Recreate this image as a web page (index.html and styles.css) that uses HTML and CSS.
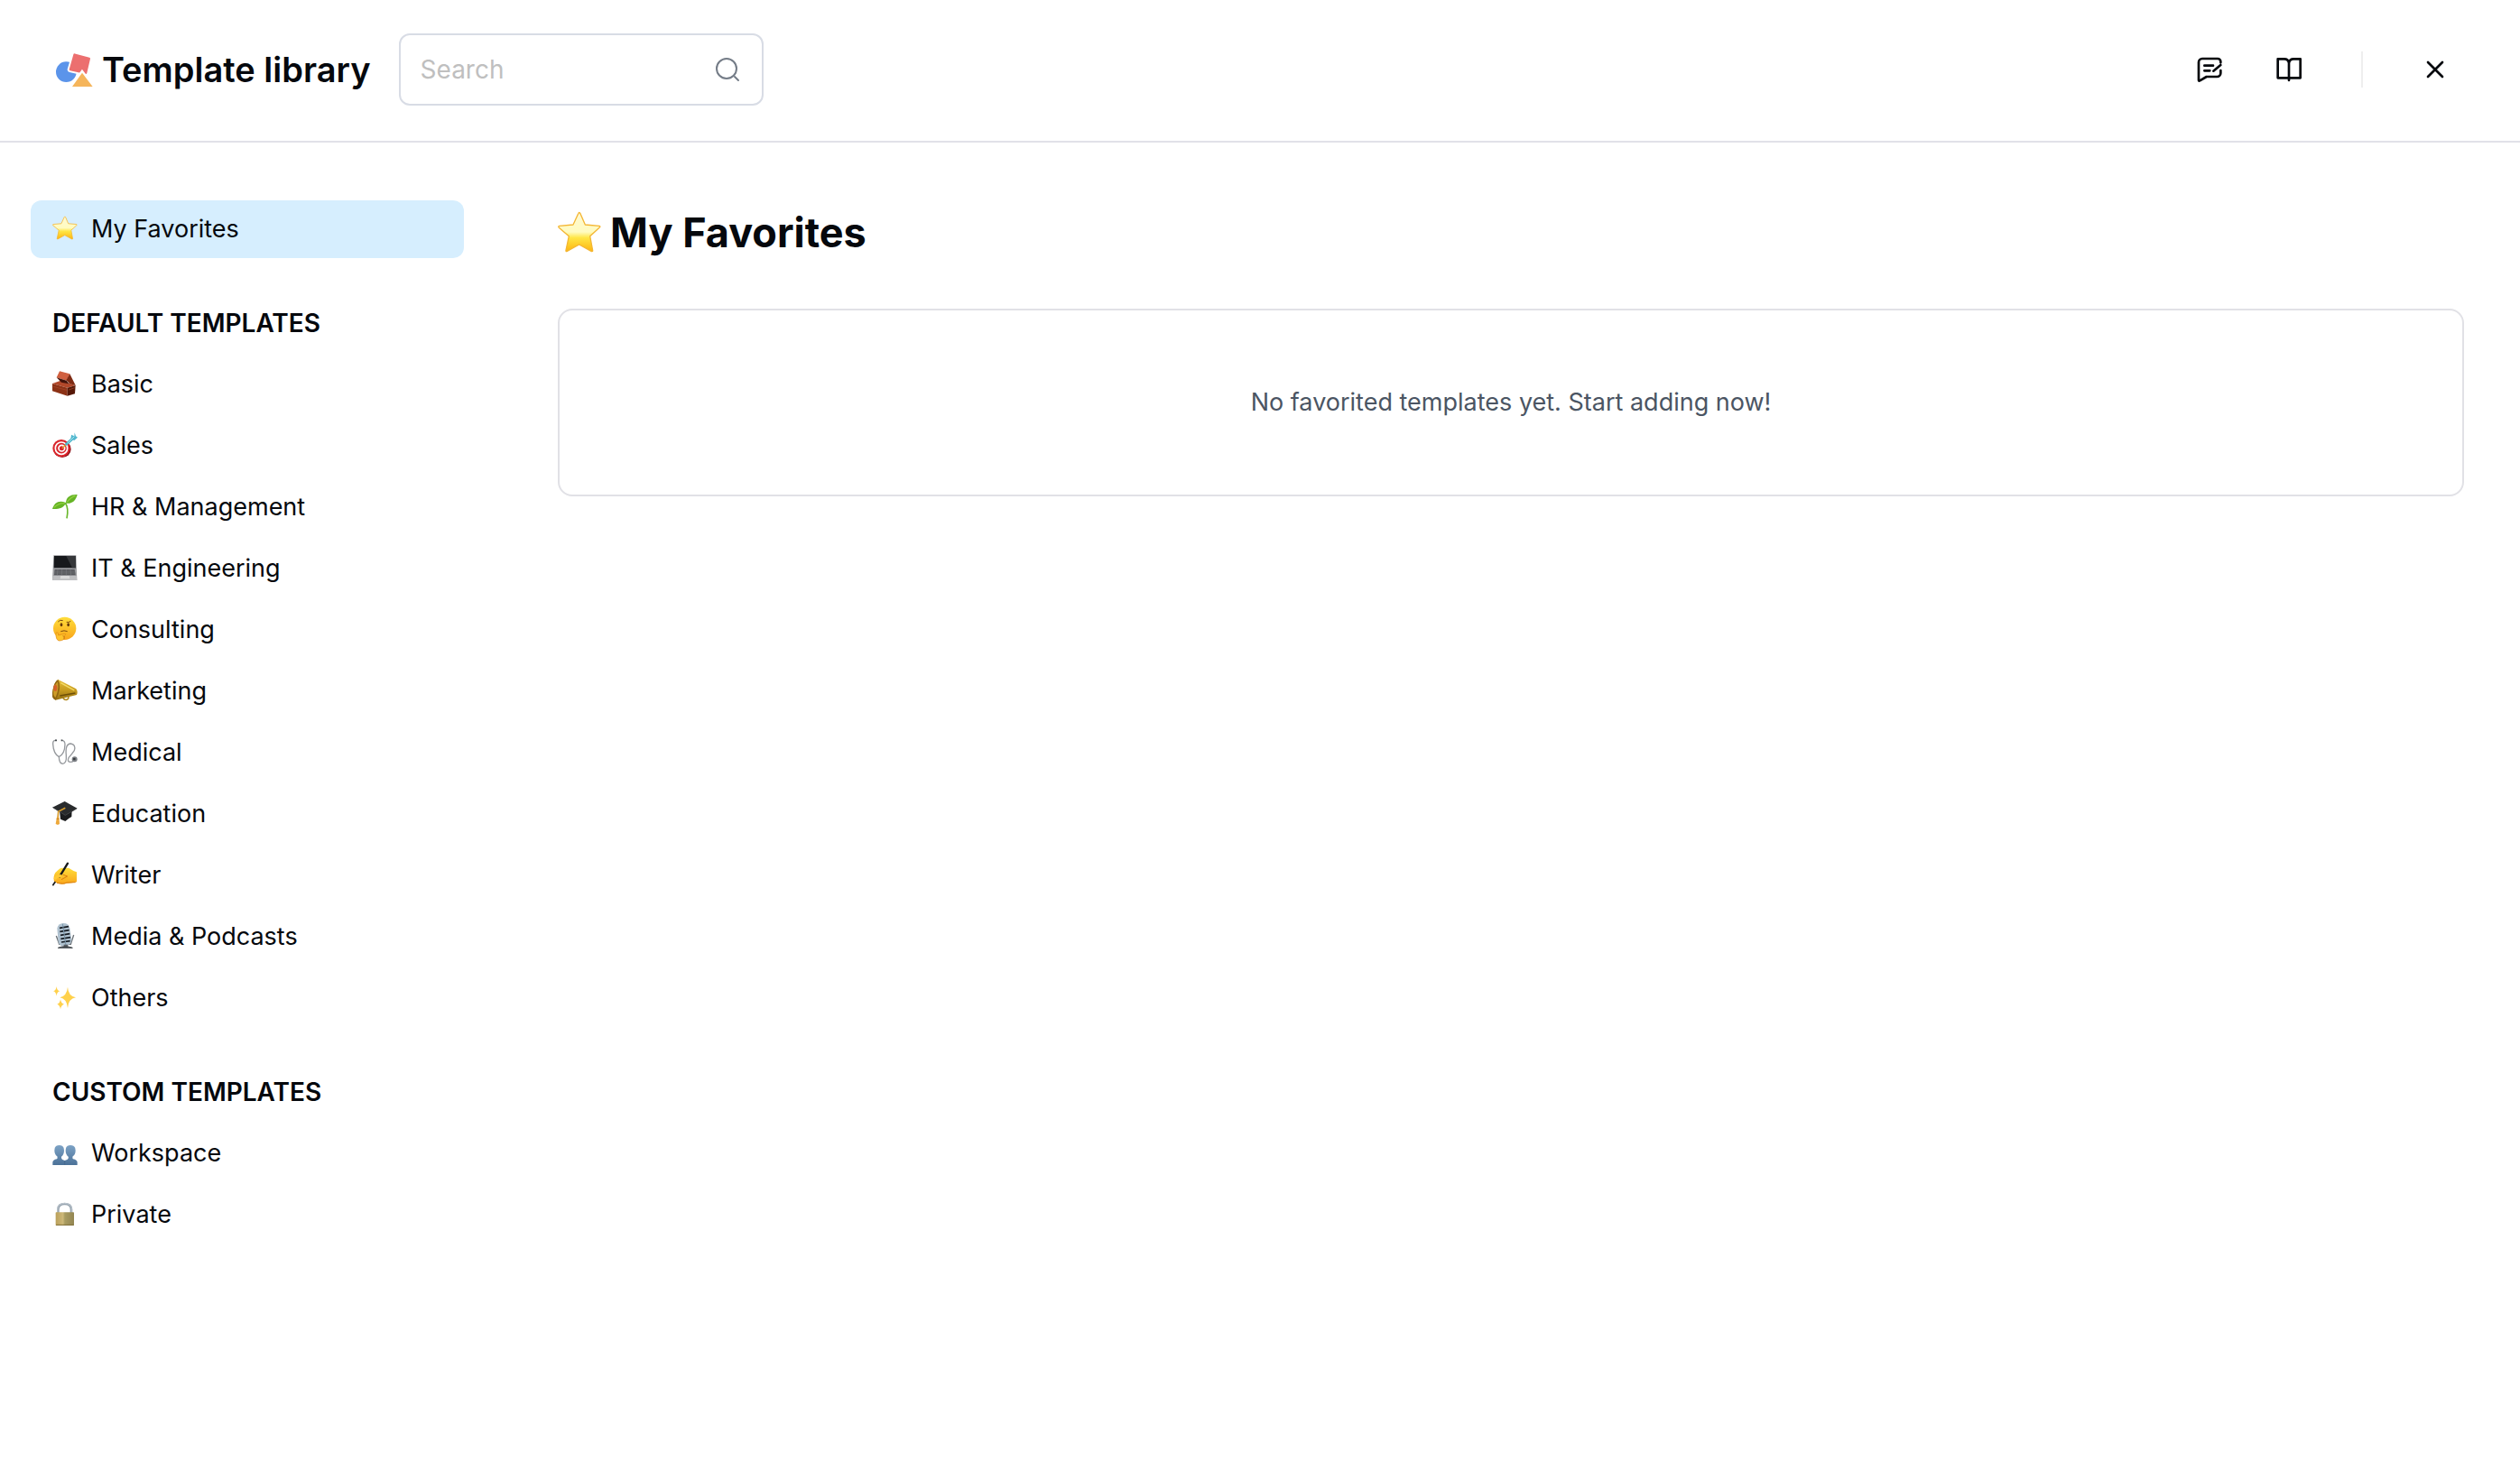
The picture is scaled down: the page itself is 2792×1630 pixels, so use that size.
FILE: index.html
```html
<!DOCTYPE html>
<html lang="en">

<head>
    <meta charset="UTF-8">
    <meta name="viewport" content="width=device-width, initial-scale=1.0">
    <title>Template library</title>
    <link rel="stylesheet" href="styles.css">
</head>

<body>
    <header class="header">
        <div class="brand">
            <svg class="logo" viewBox="36 39 123 117" aria-hidden="true">
                <circle cx="70" cy="104" r="34" fill="#5b94ea" />
                <path d="M98 46L147 59L136 108L83 96Z" fill="#fff" stroke="#fff" stroke-width="18" stroke-linejoin="round" />
                <path d="M98 47L146 60L135 107L84 96Z" fill="#ec6f6f" stroke="#ec6f6f" stroke-width="8" stroke-linejoin="round" />
                <path d="M123 107L158 153H90Z" fill="#fff" stroke="#fff" stroke-width="14" />
                <path d="M123 107L158 153H90Z" fill="#f5b55b" />
            </svg>
            <h1 class="title">Template library</h1>
        </div>
        <div class="search">
            <input type="text" class="search-input" placeholder="Search" aria-label="Search templates">
            <svg class="search-icon" viewBox="0 0 28 28" aria-hidden="true">
                <circle cx="13" cy="13" r="11" />
                <path d="M22 22L26 26" />
            </svg>
        </div>
        <div class="actions">
            <button type="button" class="icon-button" aria-label="Feedback">
                <svg viewBox="156 122 96 96" aria-hidden="true">
                    <path d="M241 147V144A10 10 0 0 0 231 134H180A12 12 0 0 0 168 146V205Q168 209 172 207L194 194H229A12 12 0 0 0 241 182V173M187 157H216M187 174H205M217 175L241 155" />
                </svg>
            </button>
            <button type="button" class="icon-button" aria-label="Guide">
                <svg viewBox="420 122 96 96" aria-hidden="true">
                    <path d="M468 148Q465 135 453 135H431V198H506V135H483Q471 135 468 148V206" />
                </svg>
            </button>
            <span class="divider"></span>
            <button type="button" class="icon-button" aria-label="Close">
                <svg viewBox="906 123 96 96" aria-hidden="true">
                    <path d="M930 147L978 195M978 147L930 195" />
                </svg>
            </button>
        </div>
    </header>

    <div class="layout">
        <nav class="sidebar" aria-label="Template categories">
            <a href="#favorites" class="item active">
                <svg class="emoji" viewBox="0 0 144 154" aria-hidden="true">
                    <use href="#star" />
                </svg>
                My Favorites
            </a>

            <h2 class="group">DEFAULT TEMPLATES</h2>
            <a href="#basic" class="item">
                <svg class="emoji" viewBox="0 0 84 90" aria-hidden="true">
                    <path d="M0 42L28 32L77 48L50 56Z" fill="#b2482a" />
                    <path d="M0 42L50 56V83L0 67Z" fill="#8c3216" />
                    <path d="M50 56L77 48L75 76L50 83Z" fill="#561807" />
                    <path d="M24 1L58 10L47 32L14 22Z" fill="#d06040" />
                    <path d="M58 10L77 48L58 43L46 31Z" fill="#7e2b14" />
                    <path d="M14 22L47 32L55 43L30 38Z" fill="#44130a" />
                    <path d="M3 52L48 64M55 63L74 56" stroke="#a8492c" stroke-width="2" fill="none" />
                </svg>
                Basic
            </a>
            <a href="#sales" class="item">
                <svg class="emoji" viewBox="0 0 84 90" aria-hidden="true">
                    <ellipse cx="33" cy="56" rx="29" ry="28" fill="#8d1118" />
                    <circle cx="30" cy="53" r="29" fill="#d9262c" />
                    <circle cx="30" cy="53" r="20" fill="none" stroke="#fff" stroke-width="5" />
                    <circle cx="31" cy="53" r="10" fill="none" stroke="#fff" stroke-width="5" />
                    <path d="M33 53L48 38" stroke="#d9a42c" stroke-width="4" />
                    <path d="M44 42L66 22" stroke="#4bb4c9" stroke-width="9" />
                    <path d="M61 23L63 8L73 13L74 1L78 13L84 17L73 27Z" fill="#52b7cf" />
                    <path d="M50 37L73 14" stroke="#a9e7ef" stroke-width="3" />
                </svg>
                Sales
            </a>
            <a href="#hr" class="item">
                <svg class="emoji" viewBox="0 0 84 90" aria-hidden="true">
                    <path d="M43 31Q55 48 48 82" stroke="#69b72b" stroke-width="5" fill="none" />
                    <path d="M0 51C7 29 22 21 45 30C38 49 20 52 0 51Z" fill="#65b425" />
                    <path d="M45 32C45 12 59 2 83 3C78 23 66 35 45 32Z" fill="#65b425" />
                    <path d="M6 46Q22 30 41 32M49 28Q60 12 77 7" stroke="#91cf41" stroke-width="4" fill="none" />
                </svg>
                HR &amp; Management
            </a>
            <a href="#it" class="item">
                <svg class="emoji" viewBox="0 0 84 90" aria-hidden="true">
                    <path d="M4 1H79L82 84H0Z" fill="#9c9da0" />
                    <path d="M6 3H77L78 43H5Z" fill="#17191c" />
                    <path d="M46 3H77L78 43H66Z" fill="#35373a" />
                    <path d="M8 48H74L77 67H6Z" fill="#55575b" />
                    <path d="M8 54H75M7 60H76M18 48L16 67M32 48L31 67M46 48V67M60 48L62 67" stroke="#77797d" stroke-width="2" />
                    <path d="M2 69H80L82 84H0Z" fill="#bebfc1" />
                    <path d="M28 69H56L58 79H26Z" fill="#dadadb" />
                </svg>
                IT &amp; Engineering
            </a>
            <a href="#consulting" class="item">
                <svg class="emoji" viewBox="0 0 84 90" aria-hidden="true">
                    <circle cx="41" cy="40" r="38" fill="url(#face)" />
                    <ellipse cx="30" cy="28" rx="4" ry="6" fill="#673a0a" />
                    <ellipse cx="53" cy="28" rx="4" ry="6" fill="#673a0a" />
                    <path d="M19 18Q25 10 35 14M47 19Q55 21 61 16M28 50Q39 45 50 50" stroke="#7d4b10" stroke-width="3" fill="none" />
                    <path d="M12 55Q19 49 20 63L39 58Q50 57 40 64V73Q35 82 23 81Q11 80 12 55Z" fill="#ffc42c" stroke="#de8511" stroke-width="2" />
                    <path d="M34 65L39 66V76" stroke="#bc6810" stroke-width="2" fill="none" />
                </svg>
                Consulting
            </a>
            <a href="#marketing" class="item">
                <svg class="emoji" viewBox="0 0 84 90" aria-hidden="true">
                    <path d="M35 61Q36 75 48 73Q57 70 52 57" fill="none" stroke="#b38b23" stroke-width="5" />
                    <path d="M19 6L79 37Q86 45 81 57L11 74Q-5 69 1 45Q5 15 19 6Z" fill="url(#gold)" />
                    <path d="M19 6Q33 35 11 74Q-4 69 1 45Q5 14 19 6Z" fill="#8f6512" />
                    <path d="M17 13Q24 35 11 65Q1 61 4 42Q7 24 17 13Z" fill="#cc9b27" />
                    <ellipse cx="10" cy="34" rx="6" ry="11" fill="#d5612b" />
                    <path d="M28 17L73 42" stroke="#f5dc68" stroke-width="4" />
                    <path d="M25 60L76 51" stroke="#6f5008" stroke-width="4" />
                </svg>
                Marketing
            </a>
            <a href="#medical" class="item">
                <svg class="emoji" viewBox="0 0 84 90" aria-hidden="true">
                    <g fill="none" stroke="#96999d" stroke-width="4">
                        <path d="M11 4Q1 4 2 17Q4 50 22 59Q41 50 42 18Q42 5 32 4" />
                        <path d="M22 58Q22 82 35 82Q48 81 46 53Q42 15 61 15Q79 18 73 38Q65 50 54 62Q48 77 62 76Q71 76 74 66" />
                    </g>
                    <path d="M9 4H15M29 4H34" stroke="#45494d" stroke-width="5" />
                    <circle cx="74" cy="67" r="9" fill="#7b7f84" />
                    <circle cx="73" cy="66" r="4" fill="#34383c" />
                </svg>
                Medical
            </a>
            <a href="#education" class="item">
                <svg class="emoji" viewBox="0 0 84 90" aria-hidden="true">
                    <path d="M24 33L65 31L64 54Q55 58 43 69L27 62Z" fill="#1b1c1e" />
                    <path d="M0 23L41 3L83 26L43 51Z" fill="#292b2d" />
                    <path d="M2 23L43 49L81 27" stroke="#4b4d50" stroke-width="2" fill="none" />
                    <path d="M43 25L20 37L18 60" fill="none" stroke="#d69a2b" stroke-width="5" />
                    <path d="M15 55H22L24 78L18 81L11 78Z" fill="#eda83a" />
                    <path d="M14 61H23" stroke="#a96a13" stroke-width="2" />
                </svg>
                Education
            </a>
            <a href="#writer" class="item">
                <svg class="emoji" viewBox="0 0 84 90" aria-hidden="true">
                    <path d="M5 61Q2 40 17 29Q27 18 37 21L54 20Q69 30 81 34V67Q60 72 47 71Q32 78 15 70Q6 69 5 61Z" fill="url(#face)" />
                    <path d="M15 70Q38 75 48 69L77 68M30 59L50 48L36 43" fill="none" stroke="#d87e0e" stroke-width="3" />
                    <path d="M51 5L24 49" stroke="#17191b" stroke-width="7" fill="none" stroke-linecap="round" />
                    <path d="M10 66L1 79" stroke="#17191b" stroke-width="5" />
                    <path d="M8 58Q16 45 31 47" fill="none" stroke="#ffca35" stroke-width="9" />
                </svg>
                Writer
            </a>
            <a href="#media" class="item">
                <svg class="emoji" viewBox="0 0 84 90" aria-hidden="true">
                    <path d="M13 42L23 70H61L71 39" fill="none" stroke="#6b7278" stroke-width="4" />
                    <path d="M16 17Q19 1 37 0Q55 0 58 17L64 57Q62 71 47 74L34 76Q23 74 20 62Z" fill="#afc1cf" />
                    <path d="M24 16L54 11M25 28L56 23M27 40L58 35M28 52L60 47M30 63L59 59" stroke="#171d24" stroke-width="5" />
                    <path d="M34 2L45 74" stroke="#7895a9" stroke-width="3" />
                    <path d="M38 71H52V79H38Z" fill="#5b6167" />
                    <path d="M19 82Q42 72 67 82Z" fill="#44494e" stroke="#44494e" stroke-width="3" />
                </svg>
                Media &amp; Podcasts
            </a>
            <a href="#others" class="item">
                <svg class="emoji" viewBox="0 0 84 90" aria-hidden="true">
                    <path d="M51 8Q53 38 78 43Q53 47 51 78Q48 47 25 43Q48 38 51 8ZM14 6Q15 20 25 22Q15 24 14 38Q12 24 3 22Q12 20 14 6ZM27 49Q29 63 39 65Q29 68 27 82Q25 68 16 65Q25 63 27 49Z" fill="#ffd14c" />
                </svg>
                Others
            </a>

            <h2 class="group">CUSTOM TEMPLATES</h2>
            <a href="#workspace" class="item">
                <svg class="emoji" viewBox="0 0 84 90" aria-hidden="true">
                    <path d="M1 84V75Q1 67 15 64Q18 62 16 55Q7 48 7 35Q7 18 23 18Q39 18 39 35Q39 49 30 56Q29 63 34 66L41 69L49 66Q55 63 53 56Q44 49 44 35Q44 18 60 18Q77 18 77 35Q77 49 68 55Q66 62 69 64Q83 67 83 75V84Z" fill="url(#people)" />
                    <path d="M41 70V84" stroke="#426589" stroke-width="2" />
                </svg>
                Workspace
            </a>
            <a href="#private" class="item">
                <svg class="emoji" viewBox="0 0 84 90" aria-hidden="true">
                    <path d="M19 40V27Q20 9 41 9Q62 9 63 27V40" fill="none" stroke="#98a5b0" stroke-width="8" />
                    <path d="M17 38V27Q19 8 41 7Q63 8 65 27V38" fill="none" stroke="#d0d8df" stroke-width="2" />
                    <rect x="11" y="37" width="61" height="44" rx="2" fill="url(#lock)" />
                    <path d="M12 79H71" stroke="#82723c" stroke-width="3" />
                </svg>
                Private
            </a>
        </nav>

        <main class="content">
            <h2 class="heading">
                <svg class="heading-icon" viewBox="0 0 144 144" aria-hidden="true">
                    <use href="#star" />
                </svg>
                My Favorites
            </h2>
            <section class="empty">
                <p>No favorited templates yet. Start adding now!</p>
            </section>
        </main>
    </div>

    <!-- Shared shapes and gradients for the category icons -->
    <svg class="defs" aria-hidden="true">
        <defs>
            <linearGradient id="star-fill" x1="0" y1="0" x2="0" y2="1">
                <stop offset="0" stop-color="#fff9d2" />
                <stop offset="0.5" stop-color="#fffbc0" />
                <stop offset="0.65" stop-color="#ffe645" />
                <stop offset="1" stop-color="#fdb510" />
            </linearGradient>
            <linearGradient id="face" x1="0" y1="0" x2="0" y2="1">
                <stop offset="0" stop-color="#ffde3b" />
                <stop offset="1" stop-color="#f9a51b" />
            </linearGradient>
            <linearGradient id="gold" x1="0" y1="0" x2="0" y2="1">
                <stop offset="0" stop-color="#e5bd39" />
                <stop offset="0.5" stop-color="#c89d20" />
                <stop offset="1" stop-color="#977112" />
            </linearGradient>
            <linearGradient id="people" x1="0" y1="0" x2="0" y2="1">
                <stop offset="0" stop-color="#7ca2c5" />
                <stop offset="1" stop-color="#4b7198" />
            </linearGradient>
            <linearGradient id="lock">
                <stop offset="0" stop-color="#baa05a" />
                <stop offset="0.4" stop-color="#cdb879" />
                <stop offset="0.5" stop-color="#a99c61" />
                <stop offset="1" stop-color="#938552" />
            </linearGradient>
            <path id="star" d="M68 8Q71 1 75 8L91 45L138 49Q143 51 138 55L107 83L116 131Q116 135 111 133L71 111L31 133Q26 135 27 130L37 83L4 55Q0 50 5 49L51 45Z" fill="url(#star-fill)" stroke="#f4b633" stroke-width="4" stroke-linejoin="round" />
        </defs>
    </svg>
</body>

</html>
```
FILE: styles.css
```css
* {
    box-sizing: border-box;
}

body {
    margin: 0;
    min-height: 100vh;
    font-family: Inter, "Liberation Sans", sans-serif;
    font-size: 27px;
    line-height: 40px;
    color: #05080d;
    background-color: #fff;
}

.header {
    display: flex;
    align-items: center;
    gap: 31px;
    padding: 37px 62px 39px;
    border-bottom: 2px solid #e1e1e8;
}

.brand {
    display: flex;
    align-items: center;
    gap: 10px;
}

.logo {
    width: 41px;
    height: 39px;
}

.title {
    margin: 0;
    font-size: 38px;
    line-height: 48px;
    font-weight: 600;
}

.search {
    position: relative;
    width: 404px;
}

.search-input {
    display: block;
    width: 100%;
    height: 80px;
    padding: 0 72px 0 22px;
    border: 2px solid #d8dce5;
    border-radius: 12px;
    font-family: inherit;
    font-size: 28px;
    color: inherit;
    background-color: #fff;
}

.search-input::placeholder {
    color: #bfbfbf;
    opacity: 1;
}

.search-icon {
    position: absolute;
    top: 26px;
    right: 26px;
    width: 28px;
    height: 28px;
    fill: none;
    stroke: #747c87;
    stroke-width: 2;
    stroke-linecap: round;
    pointer-events: none;
}

.actions {
    display: flex;
    align-items: center;
    gap: 24px;
    margin-left: auto;
}

.icon-button {
    display: flex;
    align-items: center;
    justify-content: center;
    width: 64px;
    height: 64px;
    padding: 0;
    border: none;
    border-radius: 12px;
    background: none;
    cursor: pointer;
}

.icon-button:hover {
    background-color: #f3f4f6;
}

.icon-button svg {
    width: 32px;
    height: 32px;
    fill: none;
    stroke: #05080d;
    stroke-width: 8;
    stroke-linecap: round;
    stroke-linejoin: round;
}

.divider {
    width: 2px;
    height: 40px;
    margin: 0 24px;
    background-color: #eee;
}

.layout {
    display: flex;
    gap: 104px;
    padding: 64px 62px 64px 34px;
}

.sidebar {
    display: flex;
    flex-direction: column;
    flex: 0 0 480px;
    gap: 4px;
}

.item {
    display: flex;
    align-items: center;
    gap: 15px;
    height: 64px;
    padding: 0 24px;
    border-radius: 12px;
    color: inherit;
    text-decoration: none;
}

.item.active {
    background-color: #d6eefe;
}

.emoji {
    flex: none;
    width: 28px;
    height: 30px;
}

.group {
    margin: 36px 0 0;
    padding: 0 24px;
    font-size: 28px;
    line-height: 64px;
    font-weight: 600;
}

.content {
    flex: 1;
    min-width: 0;
}

.heading {
    display: flex;
    align-items: center;
    gap: 10px;
    margin: 0 0 48px;
    font-size: 45px;
    line-height: 72px;
    font-weight: 700;
}

.heading-icon {
    flex: none;
    width: 48px;
    height: 48px;
}

.empty {
    padding: 82px 32px;
    border: 2px solid #e1e1e6;
    border-radius: 16px;
    color: #4b5563;
    text-align: center;
}

.empty p {
    margin: 0;
}

.defs {
    position: absolute;
    width: 0;
    height: 0;
}
```
